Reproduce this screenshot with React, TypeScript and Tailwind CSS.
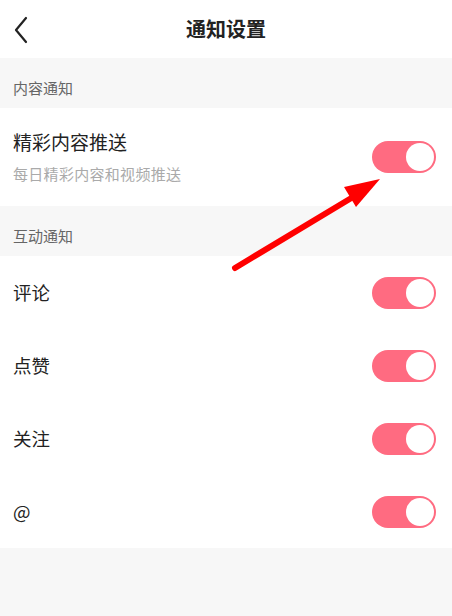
import React from "react";

const font = { fontFamily: '"Noto Sans CJK SC", "Noto Sans", sans-serif' };

function Toggle() {
  return (
    <div className="w-[64px] h-[32px] rounded-full bg-[#ff6b81] relative shrink-0">
      <div className="absolute right-[2px] top-[2px] w-[28px] h-[28px] rounded-full bg-white" />
    </div>
  );
}

function SimpleRow({ label }: { label: string }) {
  return (
    <div className="h-[73px] flex items-center justify-between pl-[13px] pr-[16px]">
      <span className="text-[18.5px] text-[#222]">{label}</span>
      <Toggle />
    </div>
  );
}

export default function App() {
  return (
    <div className="w-[452px] h-[616px] bg-[#f7f7f7] relative overflow-hidden" style={font}>
      <div className="h-[58px] bg-white relative flex items-center justify-center">
        <svg className="absolute left-[13px] top-[16px]" width="18" height="28" viewBox="0 0 18 28">
          <path d="M13 2 L3 14 L13 26" fill="none" stroke="#222" strokeWidth="2.2" strokeLinecap="round" strokeLinejoin="round" />
        </svg>
        <span className="text-[20px] font-bold text-[#222]">通知设置</span>
      </div>
      <div className="h-[50px] flex items-center pl-[13px] pt-[10px] text-[15px] text-[#666]">内容通知</div>
      <div className="h-[98px] bg-white flex items-center justify-between pl-[13px] pr-[16px]">
        <div className="flex flex-col">
          <span className="text-[19px] text-[#222] leading-[26px]">精彩内容推送</span>
          <span className="text-[15px] tracking-[0.3px] text-[#aaa] leading-[22px] mt-[8px]">每日精彩内容和视频推送</span>
        </div>
        <Toggle />
      </div>
      <div className="h-[50px] flex items-center pl-[13px] pt-[10px] text-[15px] text-[#666]">互动通知</div>
      <div className="bg-white">
        <SimpleRow label="评论" />
        <SimpleRow label="点赞" />
        <SimpleRow label="关注" />
        <SimpleRow label="@" />
      </div>
      <svg className="absolute left-0 top-0 pointer-events-none" width="452" height="616" viewBox="0 0 452 616">
        <line x1="235" y1="268" x2="358" y2="194" stroke="#ff0000" strokeWidth="6" strokeLinecap="round" />
        <polygon points="380,179 344,187 356,207" fill="#ff0000" />
      </svg>
    </div>
  );
}
